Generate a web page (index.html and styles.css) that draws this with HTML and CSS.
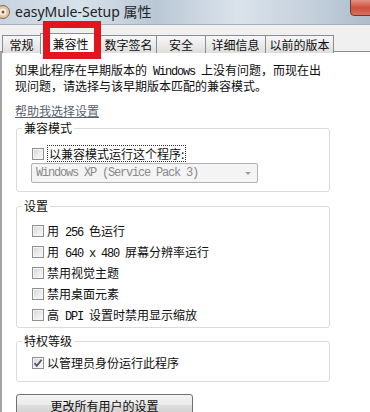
FILE: index.html
```html
<!DOCTYPE html>
<html lang="zh-CN">
<head>
    <meta charset="UTF-8">
    <title>easyMule-Setup 属性</title>
    <link rel="stylesheet" href="styles.css">
</head>
<body>
    <div class="window">
        <!-- 标题栏 -->
        <div class="titlebar">
            <span class="app-icon">
                <svg width="14" height="14" viewBox="0 0 14 14">
                    <circle cx="7" cy="7" r="6.5" fill="#d8c7a8" stroke="#8a6a44"/>
                    <circle cx="7" cy="7" r="3.5" fill="#f6efe2"/>
                    <circle cx="7" cy="7" r="1.5" fill="#9b4a2a"/>
                </svg>
            </span>
            <span class="title">easyMule-Setup 属性</span>
            <span class="close"></span>
        </div>

        <!-- 选项卡 -->
        <div class="tabs">
            <div class="tab">常规</div>
            <div class="tab active">兼容性</div>
            <div class="tab">数字签名</div>
            <div class="tab">安全</div>
            <div class="tab">详细信息</div>
            <div class="tab">以前的版本</div>
        </div>
        <div class="highlight"></div>

        <div class="panel">
            <p class="intro">如果此程序在早期版本的<span class="en"> Windows </span>上没有问题，而现在出<br>现问题，请选择与该早期版本匹配的兼容模式。</p>
            <a class="help">帮助我选择设置</a>

            <fieldset class="group group-mode">
                <legend>兼容模式</legend>
                <label class="check">
                    <span class="box"></span>
                    <span class="focus">以兼容模式运行这个程序:</span>
                </label>
                <div class="select">
                    <span class="en">Windows XP (Service Pack 3)</span>
                    <span class="arrow"></span>
                </div>
            </fieldset>

            <fieldset class="group group-settings">
                <legend>设置</legend>
                <label class="check"><span class="box"></span><span>用<span class="en"> 256 </span>色运行</span></label>
                <label class="check"><span class="box"></span><span>用<span class="en"> 640 x 480 </span>屏幕分辨率运行</span></label>
                <label class="check"><span class="box"></span><span>禁用视觉主题</span></label>
                <label class="check"><span class="box"></span><span>禁用桌面元素</span></label>
                <label class="check"><span class="box"></span><span>高<span class="en"> DPI </span>设置时禁用显示缩放</span></label>
            </fieldset>

            <fieldset class="group group-level">
                <legend>特权等级</legend>
                <label class="check">
                    <span class="box">
                        <svg width="10" height="10" viewBox="0 0 10 10">
                            <path d="M1.5 5.2l2.3 2.6L8.6 1.8" fill="none" stroke="#4b5866" stroke-width="1.8"/>
                        </svg>
                    </span>
                    <span>以管理员身份运行此程序</span>
                </label>
            </fieldset>

            <button class="btn">更改所有用户的设置</button>
        </div>
    </div>
</body>
</html>
```

FILE: styles.css
```css
body {
    margin: 0;
    font-family: "Noto Sans CJK SC", sans-serif;
    font-size: 12px;
    color: #0e0e0e;
    background: #f0f0f0;
}

.window {
    position: relative;
    width: 370px;
    height: 412px;
    overflow: hidden;
}

/* 标题栏 */
.titlebar {
    display: flex;
    align-items: flex-start;
    height: 24px;
    background: linear-gradient(90deg, #c8d4e0 0%, #d7e1ea 22%, #b9c7d5 42%, #dae3ec 64%, #c4d0dc 84%, #aebccb 100%);
    border-bottom: 1px solid #a6b2be;
}

.app-icon {
    margin: 5px 0 0 -4px;
    height: 14px;
}

.title {
    margin: 3px 0 0 5px;
    font-family: "Noto Sans", "Noto Sans CJK SC", sans-serif;
    font-size: 14px;
    line-height: 18px;
    color: #1e2328;
}

.close {
    margin-left: auto;
    margin-top: -2px;
    width: 22px;
    height: 16px;
    margin-right: -4px;
    background: linear-gradient(#e79a8c, #c9503f 55%, #d8705c);
    border: 1px solid #6a3a34;
    border-radius: 0 0 0 4px;
}

/* 选项卡 */
.tabs {
    display: grid;
    grid-template-columns: 38px 60px 56px 49px 60px 68px;
    align-items: end;
    height: 18px;
    margin: 8px 0 0 3px;
}

.tab {
    height: 17px;
    line-height: 17px;
    text-align: center;
    background: linear-gradient(#f7f7f7, #ebebeb 50%, #dedede);
    border: 1px solid #898c95;
    border-bottom: none;
    margin-left: -1px;
}

.tab.active {
    height: 20px;
    line-height: 20px;
    background: #fff;
    position: relative;
    z-index: 1;
    margin-bottom: -1px;
}

/* 红色标注框 */
.highlight {
    position: absolute;
    top: 21px;
    left: 43px;
    width: 58px;
    height: 38px;
    box-sizing: border-box;
    border: 7px solid #e3151c;
    z-index: 2;
}

/* 内容面板 */
.panel {
    height: 360px;
    padding: 11px 0 0 13px;
    background: #fff;
    border-top: 1px solid #898c95;
    border-left: 2px solid #a4a4a4;
}

.intro {
    margin: 0;
    line-height: 13px;
}

.en {
    font-family: "Liberation Mono", monospace;
    font-size: 12px;
    letter-spacing: -1.2px;
}

.help {
    display: block;
    margin-top: 12px;
    width: max-content;
    line-height: 13px;
    color: #56616d;
    text-decoration: underline;
}

/* 分组框 */
.group {
    box-sizing: border-box;
    width: 314px;
    margin: 4px 0 0 1px;
    padding: 10px 14px 8px 14px;
    border: 1px solid #d9dcdf;
    border-radius: 3px;
    min-inline-size: 0;
}

.group legend {
    margin-left: -9px;
    padding: 0 2px;
    line-height: 14px;
}

.group-settings {
    margin-top: 7px;
    padding: 7px 14px 2px 14px;
}

.group-level {
    margin-top: 6px;
    padding: 4px 14px 8px 14px;
}

.check {
    display: flex;
    align-items: center;
    height: 21px;
    margin-left: 1px;
}

.group-mode .check {
    height: 17px;
}

.box {
    display: flex;
    align-items: center;
    justify-content: center;
    box-sizing: border-box;
    width: 12px;
    height: 12px;
    margin-right: 3px;
    border: 1px solid #8f9090;
    background: linear-gradient(135deg, #d4d4d4, #eeeeee 60%, #f8f8f8);
    box-shadow: inset 0 0 0 1px #f4f4f4;
}

.focus {
    padding: 0 1px;
    line-height: 15px;
    border: 1px dotted #333;
}

/* 下拉框（禁用） */
.select {
    display: flex;
    align-items: center;
    width: 227px;
    height: 20px;
    box-sizing: border-box;
    margin-top: 1px;
    padding: 0 6px 0 4px;
    background: #f4f4f4;
    border: 1px solid #b2b2b2;
    border-radius: 2px;
    color: #8a8a8a;
}

.arrow {
    margin-left: auto;
    width: 0;
    height: 0;
    border-left: 3px solid transparent;
    border-right: 3px solid transparent;
    border-top: 3px solid #a0a0a0;
}

/* 按钮 */
.btn {
    display: block;
    margin: 12px 0 0 1px;
    width: 177px;
    height: 23px;
    padding: 0;
    font-family: inherit;
    font-size: 12px;
    color: #0e0e0e;
    background: linear-gradient(#f3f3f3, #ebebeb 45%, #dddddd 50%, #cfcfcf);
    border: 1px solid #707070;
    border-radius: 3px;
}
```
